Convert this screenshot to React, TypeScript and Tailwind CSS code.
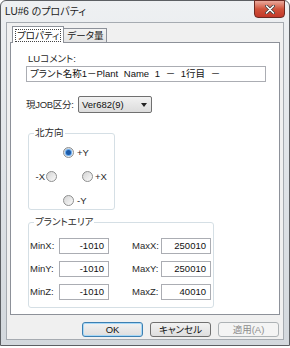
import React from "react";

const font = '"Liberation Sans", "Noto Sans CJK JP", sans-serif';

function Radio({ checked }: { checked?: boolean }) {
  return (
    <div className="w-[11px] h-[11px] shrink-0 rounded-full border border-[#8e8f8f] bg-gradient-to-br from-[#d4d4d4] to-[#fbfbfb] flex items-center justify-center">
      {checked && <div className="w-[5px] h-[5px] rounded-full bg-[#1c5aa8] shadow-[0_0_1px_1px_#5aa4f0]" />}
    </div>
  );
}

function Field({ label, value }: { label: string; value: string }) {
  return (
    <div className="flex items-center">
      <span className="w-[29px] whitespace-nowrap">{label}</span>
      <div className="w-[50px] h-[16px] border border-[#abadb3] bg-white text-right pr-[4px] leading-[14px] text-[#111]">
        {value}
      </div>
    </div>
  );
}

export default function App() {
  const rows = [
    ["MinX:", "-1010", "MaxX:", "250010"],
    ["MinY:", "-1010", "MaxY:", "250010"],
    ["MinZ:", "-1010", "MaxZ:", "40010"],
  ];
  return (
    <div
      className="w-[290px] h-[348px] bg-white text-[9.5px] leading-[12px] text-[#2a2a2a] whitespace-nowrap [font-feature-settings:'palt']"
      style={{ fontFamily: font }}
    >
      <div className="relative w-[290px] h-[346px] rounded-t-[6px] border border-[#5c5f63] bg-gradient-to-b from-[#eef0f2] via-[#dfe3e7] to-[#d3d8dd] flex flex-col">
        <div className="h-[21px] flex items-center pl-[4px] text-[10px] text-[#1b1b1b]">LU#6 のプロパティ</div>
        <div className="absolute right-[4px] top-[-1px] w-[31px] h-[18px] rounded-b-[4px] border border-[#6d2a22] bg-gradient-to-b from-[#e9a99c] via-[#d0533b] to-[#c2382a] flex items-center justify-center">
          <svg width="10" height="9" viewBox="0 0 10 9">
            <path d="M1.5 1 L8.5 8 M8.5 1 L1.5 8" stroke="#3a3a3a" strokeWidth="3" strokeLinecap="round" />
            <path d="M1.5 1 L8.5 8 M8.5 1 L1.5 8" stroke="#fff" strokeWidth="1.6" strokeLinecap="round" />
          </svg>
        </div>
        <div className="mx-[5px] h-[318px] border border-[#a6abb1] bg-[#f0f0f0] flex flex-col px-[3px] pt-[3px]">
          <div className="flex items-end h-[17px] pl-[2px]">
            <div className="relative z-10 h-[17px] px-[2px] border border-b-0 border-[#8d9199] bg-white leading-[16px] text-[#111] flex items-center">
              <span className="border border-dotted border-[#444] px-[1px] leading-[11px]">プロパティ</span>
            </div>
            <div className="h-[15px] px-[3px] border border-b-0 border-l-0 border-[#8d9199] bg-gradient-to-b from-[#f3f3f3] to-[#e3e3e3] leading-[14px] text-[#111]">
              データ量
            </div>
          </div>
          <div className="w-[270px] h-[273px] -mt-px border border-[#8d9199] bg-white flex flex-col pl-[15px]">
            <div className="mt-[10px] pl-[2px]">LUコメント:</div>
            <div className="mt-[1px] w-[240px] h-[16px] border border-[#abadb3] pl-[3px] leading-[14px] text-[#111] [word-spacing:3px]">
              プラント名称1－Plant Name 1 － 1行目 －
            </div>
            <div className="mt-[14px] flex items-center">
              <span className="w-[52px] tracking-[-0.3px]">現JOB区分:</span>
              <div className="w-[74px] h-[17px] border border-[#707070] rounded-[2px] bg-gradient-to-b from-[#f2f2f2] to-[#dcdcdc] flex items-center justify-between pl-[3px] pr-[4px] text-[#111]">
                <span>Ver682(9)</span>
                <span className="w-0 h-0 border-l-[3px] border-r-[3px] border-t-[4px] border-l-transparent border-r-transparent border-t-[#222]" />
              </div>
            </div>
            <div className="relative mt-[20px] ml-[2px] w-[87px] h-[77px] border border-[#d5dfe5] rounded-[3px]">
              <span className="absolute left-[5px] top-[-7px] bg-white px-[1px]">北方向</span>
              <div className="flex flex-col pt-[13px] gap-[13px]">
                <div className="flex items-center gap-[3px] pl-[34px] h-[11px]"><Radio checked /><span>+Y</span></div>
                <div className="flex items-center h-[11px]">
                  <span className="w-[17px] text-right pr-[1px]">-X</span>
                  <Radio />
                  <div className="ml-[25px]"><Radio /></div>
                  <span className="ml-[2px]">+X</span>
                </div>
                <div className="flex items-center gap-[3px] pl-[34px] h-[11px]"><Radio /><span>-Y</span></div>
              </div>
            </div>
            <div className="relative mt-[12px] ml-[2px] w-[186px] h-[86px] border border-[#d5dfe5] rounded-[3px]">
              <span className="absolute left-[5px] top-[-7px] bg-white px-[1px]">プラントエリア</span>
              <div className="flex flex-col gap-[7px] pt-[15px] pl-[1px]">
                {rows.map((r, i) => (
                  <div key={i} className="flex items-center gap-[23px]">
                    <Field label={r[0]} value={r[1]} />
                    <Field label={r[2]} value={r[3]} />
                  </div>
                ))}
              </div>
            </div>
          </div>
          <div className="flex justify-end gap-[7px] mt-[7px] pr-[1px]">
            <div className="w-[61px] h-[15px] rounded-[3px] border border-[#3c7fb1] shadow-[inset_0_0_0_1px_#a7d8f7] bg-gradient-to-b from-[#f2f2f2] to-[#dedede] flex items-center justify-center text-[#111]">OK</div>
            <div className="w-[61px] h-[15px] rounded-[3px] border border-[#707070] bg-gradient-to-b from-[#f2f2f2] to-[#dedede] flex items-center justify-center text-[#111]">キャンセル</div>
            <div className="w-[61px] h-[15px] rounded-[3px] border border-[#adb2b5] bg-[#f4f4f4] flex items-center justify-center text-[#8d8d8d]">適用(A)</div>
          </div>
        </div>
      </div>
    </div>
  );
}
